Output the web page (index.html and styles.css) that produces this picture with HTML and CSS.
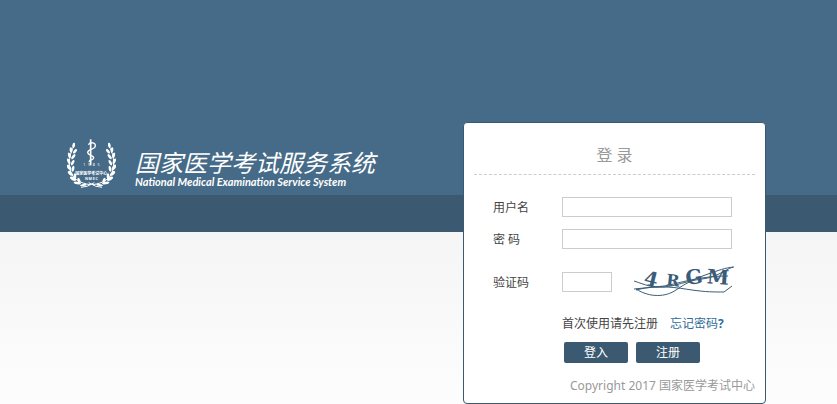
FILE: index.html
```
<!DOCTYPE html>
<html lang="zh-CN">
<head>
    <meta charset="UTF-8">
    <meta name="viewport" content="width=device-width, initial-scale=1.0">
    <title>国家医学考试服务系统</title>
    <link rel="stylesheet" href="styles.css">
</head>
<body>
    <div class="wrap">
        <header class="brand">
            <svg class="emblem" viewBox="36 24 147 156" aria-hidden="true">
                <defs>
                    <g id="branch">
                        <path d="M58 46 C44 70 38 100 48 128 C56 148 76 160 106 164" fill="none" stroke="#fff" stroke-width="3"/>
                        <g fill="#fff">
                            <ellipse cx="56" cy="46" rx="4" ry="8" transform="rotate(12 56 46)"/>
                            <ellipse cx="48" cy="60" rx="4" ry="8" transform="rotate(-8 48 60)"/>
                            <ellipse cx="60" cy="64" rx="4" ry="8" transform="rotate(42 60 64)"/>
                            <ellipse cx="43" cy="76" rx="4" ry="9" transform="rotate(-14 43 76)"/>
                            <ellipse cx="55" cy="80" rx="4" ry="9" transform="rotate(38 55 80)"/>
                            <ellipse cx="41" cy="94" rx="4" ry="9" transform="rotate(-22 41 94)"/>
                            <ellipse cx="53" cy="98" rx="4" ry="9" transform="rotate(28 53 98)"/>
                            <ellipse cx="42" cy="112" rx="5" ry="9" transform="rotate(-34 42 112)"/>
                            <ellipse cx="54" cy="116" rx="4" ry="9" transform="rotate(12 54 116)"/>
                            <ellipse cx="46" cy="130" rx="5" ry="9" transform="rotate(-46 46 130)"/>
                            <ellipse cx="60" cy="138" rx="4" ry="8" transform="rotate(-4 60 138)"/>
                            <ellipse cx="54" cy="146" rx="5" ry="10" transform="rotate(-62 54 146)"/>
                            <ellipse cx="72" cy="151" rx="4" ry="8" transform="rotate(-26 72 151)"/>
                            <ellipse cx="67" cy="159" rx="4" ry="11" transform="rotate(-82 67 159)"/>
                            <ellipse cx="85" cy="165" rx="3" ry="10" transform="rotate(-100 85 165)"/>
                        </g>
                        <path d="M78 172 Q96 172 118 158" fill="none" stroke="#fff" stroke-width="3"/>
                    </g>
                </defs>
                <use href="#branch"/>
                <use href="#branch" transform="translate(219 0) scale(-1 1)"/>
                <path d="M107 28 V106" stroke="#fff" stroke-width="5"/>
                <path d="M100 44 C108 34 122 38 121 48 C120 60 97 56 98 68 C99 78 117 74 116 84 C115 92 101 88 103 96" fill="none" stroke="#fff" stroke-width="4"/>
                <text class="emblem-year" x="113" y="109">1985</text>
                <text class="emblem-name" x="109" y="136">国家医学考试中心</text>
                <text class="emblem-abbr" x="110" y="150">NMEC</text>
            </svg>
            <div class="brand-text">
                <h1>国家医学考试服务系统</h1>
                <p>National Medical Examination Service System</p>
            </div>
        </header>

        <main class="login">
            <h2>登 录</h2>
            <form>
                <div class="row">
                    <label for="username">用户名</label>
                    <input type="text" id="username">
                </div>
                <div class="row">
                    <label for="password">密 码</label>
                    <input type="password" id="password">
                </div>
                <div class="row row-code">
                    <label for="code">验证码</label>
                    <input type="text" id="code" class="short">
                    <svg class="captcha" viewBox="0 0 102 32" role="img" aria-label="验证码图片">
                        <g class="captcha-text">
                            <text x="17" y="20" transform="rotate(14 17 14)">4</text>
                            <text x="39" y="20" class="small" transform="rotate(6 39 14)">R</text>
                            <text x="60" y="18" transform="rotate(-8 60 11)">G</text>
                            <text x="84" y="18" transform="rotate(4 84 11)">M</text>
                        </g>
                        <g fill="none" stroke="#3b5c78">
                            <path d="M0 15 C12 19 18 22 30 21 S52 15 68 13 S90 4 99 1"/>
                            <path d="M0 23 C10 22 20 21 30 20 S62 10 94 10"/>
                            <path d="M2 23 C16 32 32 31 42 24 S62 12 74 8 S90 2 100 1"/>
                            <path d="M2 24 C24 18 44 22 58 24 S80 26 90 26 L98 20"/>
                        </g>
                    </svg>
                </div>
                <div class="links">
                    <span>首次使用请先注册</span>
                    <a href="#">忘记密码<b>?</b></a>
                </div>
                <div class="buttons">
                    <button type="submit">登入</button>
                    <button type="button">注册</button>
                </div>
            </form>
            <footer>Copyright 2017 国家医学考试中心</footer>
        </main>
    </div>
</body>
</html>
```
FILE: styles.css
```
* { box-sizing: border-box; margin: 0; padding: 0; }
html { height: 100%; }
body {
    min-height: 100%;
    font: 12px/18px "Noto Sans", "Noto Sans CJK SC", sans-serif;
    color: #444;
    background: linear-gradient(#466b88 195px, #3b5a72 195px, #3b5a72 232px, #f5f5f5 232px, #fdfdfd 404px);
}

.wrap { display: flex; justify-content: space-between; align-items: flex-start; padding: 122px 71px 0 67px; }

.brand { display: flex; gap: 19px; padding-top: 16px; color: #fff; }
.emblem { width: 49px; height: 52px; }
.emblem text { fill: #fff; text-anchor: middle; font-family: "Noto Sans", "Noto Sans CJK SC", sans-serif; }
.emblem-year { font-size: 11px; letter-spacing: 8px; }
.emblem-name { font-size: 12px; font-weight: bold; }
.emblem-abbr { font-size: 11px; font-weight: bold; letter-spacing: 2px; }
.brand-text { padding-top: 10px; font-style: italic; white-space: nowrap; }
.brand-text h1 { font-size: 24px; line-height: 28px; font-weight: 400; font-family: "Noto Sans CJK SC", sans-serif; }
.brand-text p { font: italic 700 11px/12px Lato, sans-serif; }

.login { width: 303px; padding: 0 10px 8px; background: #fff; border: 1px solid #3b5a72; border-radius: 4px; }
.login h2 { padding: 20px 0 7px; border-bottom: 1px dashed #ccc; font-size: 16px; line-height: 24px; font-weight: normal; color: #999; text-align: center; }
.login form { padding: 22px 0 0 19px; }

.row { display: flex; align-items: center; height: 20px; margin-bottom: 12px; }
.row label { width: 69px; padding-top: 2px; }
.row input { width: 170px; height: 20px; padding: 0 4px; border: 1px solid #ccc; background: #fff; font: inherit; color: #444; }
.row input.short { width: 50px; }
.row-code { height: 32px; margin: 17px 0; }

.captcha { width: 102px; height: 32px; margin-left: 22px; overflow: visible; }
.captcha-text { fill: #3b5c78; text-anchor: middle; font: bold 20px "DejaVu Serif", serif; }
.captcha-text .small { font-size: 16px; }

.links { display: flex; gap: 12px; padding-left: 69px; }
.links a { color: #2f6c9a; text-decoration: none; }

.buttons { display: flex; gap: 8px; padding: 9px 0 0 71px; }
.buttons button { width: 64px; height: 21px; border: 0; border-radius: 2px; background: #3b5a72; color: #fff; font: inherit; cursor: pointer; }

.login footer { padding-top: 14px; text-align: right; color: #999; }
```
